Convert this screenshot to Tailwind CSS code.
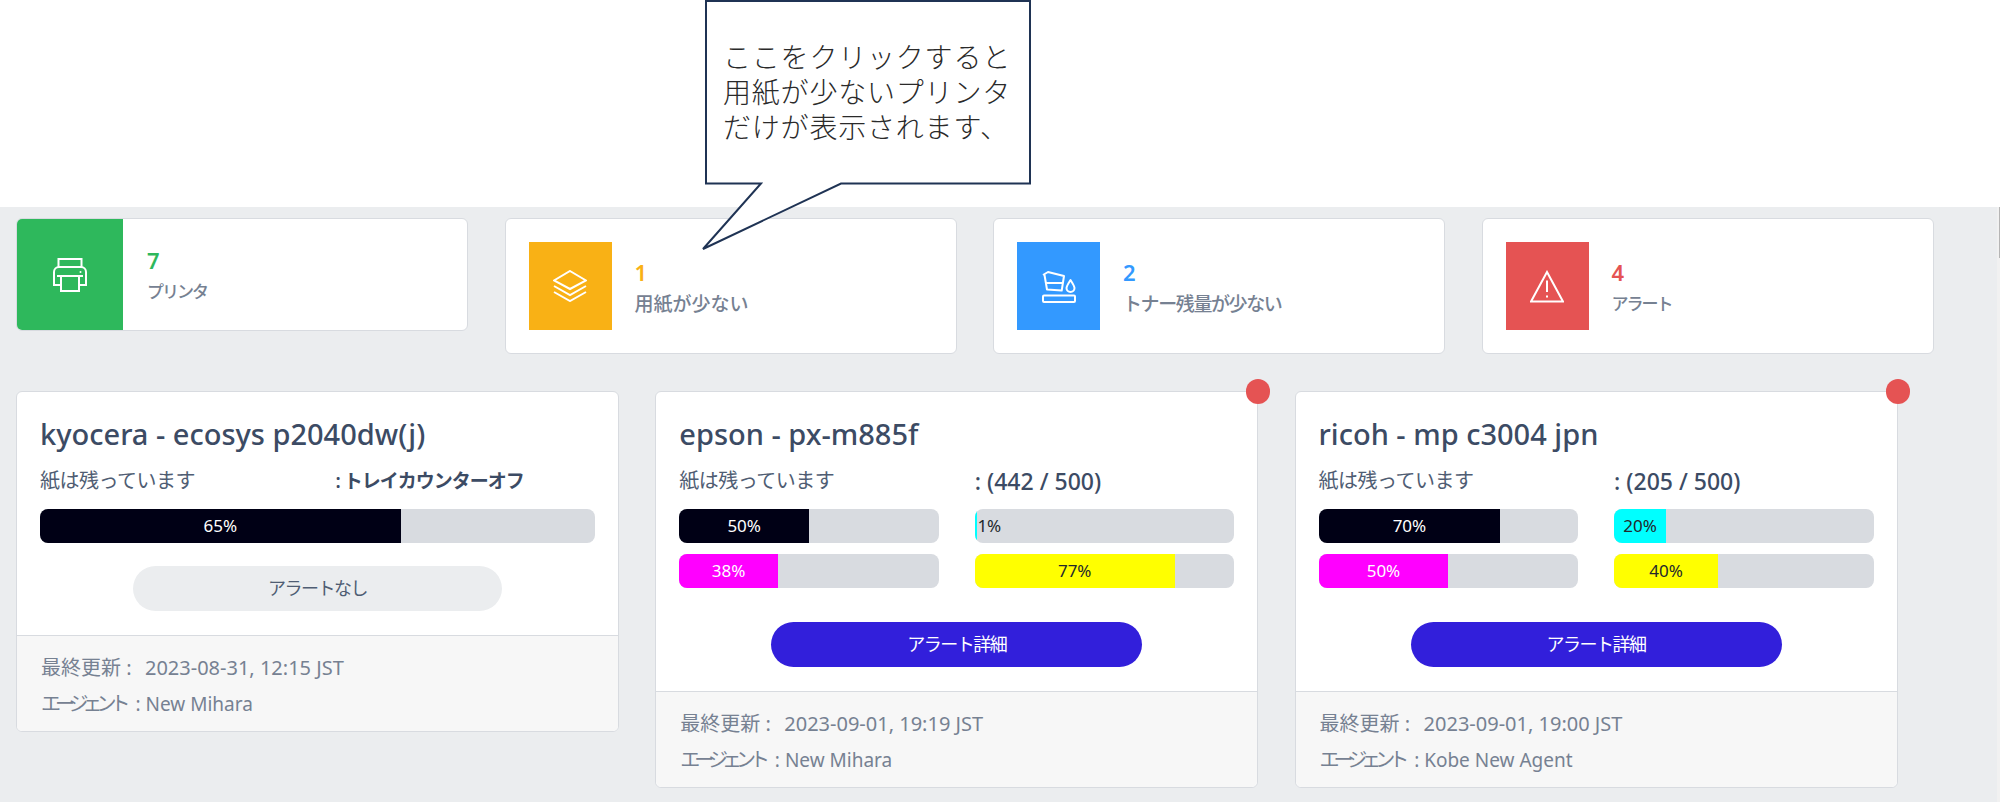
<!DOCTYPE html>
<html lang="ja">
<head>
  <meta charset="UTF-8">
  <title>プリンタ</title>
  <script src="https://cdn.jsdelivr.net/npm/@tailwindcss/browser@4"></script>
</head>
<body class="relative bg-white text-[#3c4b64] font-['Noto_Sans','Noto_Sans_CJK_JP',sans-serif] h-[802px] overflow-hidden flex flex-col">

  <!-- Callout -->
  <div class="absolute left-[700px] top-0 w-[332px] h-[252px] z-10">
    <svg width="332" height="252" viewBox="0 0 332 252" class="absolute inset-0">
      <path d="M6 1H330V183.500H141L3 249L61 183.500H6Z" fill="#fff" stroke="#1f3354" stroke-width="2"/>
    </svg>
    <div class="absolute left-[23px] top-[40px] w-[300px] text-[28px] leading-[35px] font-light text-[#2a2a2a] tracking-[0.8px] whitespace-nowrap">
      <div>ここをクリックすると</div>
      <div>用紙が少ないプリンタ</div>
      <div>だけが表示されます、</div>
    </div>
  </div>

  <!-- Scrollbar -->
  <div class="absolute right-0 top-[207px] bottom-0 w-[3px] bg-[#f1f1f1]">
    <div class="ml-auto w-[1.500px] h-[51px] bg-[#b5b5b5]"></div>
  </div>

  <div class="h-[207px] shrink-0 bg-white"></div>

  <main class="flex-1 bg-[#ebedef]">
    <!-- Stat cards -->
    <div class="grid grid-cols-[repeat(4,452px)] gap-x-[36.500px] items-start pl-[16px] pt-[11px]">
      <div class="flex h-[113px] bg-white border border-[#d8dbe0] rounded-md overflow-hidden">
        <div class="w-[106px] flex items-center justify-center bg-[#2eb85c]">
          <svg width="34" height="34" viewBox="0 0 34 34" fill="none" stroke="#fff" stroke-width="2">
            <rect x="5.500" y="1" width="23" height="8"/>
            <path d="M8 27H1V14a5 5 0 0 1 5-5h22a5 5 0 0 1 5 5v13h-7"/>
            <path d="M4 18h26"/>
            <rect x="8" y="18" width="18" height="15"/>
            <circle cx="27.500" cy="14" r="1" fill="#fff" stroke="none"/>
          </svg>
        </div>
        <div class="pl-[24px] pt-[28px]">
          <div class="text-[22px] leading-[26px] font-semibold text-[#2eb85c]">7</div>
          <div class="text-[17px] leading-[24px] mt-[7px] font-medium text-[#768192] tracking-[-2px]">プリンタ</div>
        </div>
      </div>

      <div class="flex h-[136px] p-[23px] bg-white border border-[#d8dbe0] rounded-md">
        <div class="w-[83px] flex items-center justify-center bg-[#f9b115]">
          <svg width="34" height="32" viewBox="0 0 34 32" fill="none" stroke="#fff" stroke-width="2">
            <path d="M17 1L33 10.500L17 19L1 10.500Z"/>
            <path d="M1 16L17 25L33 16"/>
            <path d="M1 22L17 31L33 22"/>
          </svg>
        </div>
        <div class="pl-[23px] pt-[17px]">
          <div class="text-[22px] leading-[26px] font-semibold text-[#f9b115]">1</div>
          <div class="text-[19px] leading-[24px] mt-[7px] font-medium text-[#768192]">用紙が少ない</div>
        </div>
      </div>

      <div class="flex h-[136px] p-[23px] bg-white border border-[#d8dbe0] rounded-md">
        <div class="w-[83px] flex items-center justify-center bg-[#3399ff]">
          <svg width="34" height="33" viewBox="0 0 34 33" fill="none" stroke="#fff" stroke-width="2" stroke-linejoin="round">
            <path d="M1 5L6 2L22 6L19.700 20.600L5 19.500L2.500 5"/>
            <path d="M4 13L21 13"/>
            <path d="M28.500 10C26 14 24.500 16 24.500 18A4 4 0 0 0 32.500 18C32.500 16 31 14 28.500 10Z"/>
            <rect x="1" y="25.500" width="32" height="6.500" rx="1"/>
          </svg>
        </div>
        <div class="pl-[23px] pt-[17px]">
          <div class="text-[22px] leading-[26px] font-semibold text-[#3399ff]">2</div>
          <div class="text-[19px] leading-[24px] mt-[7px] font-medium text-[#768192] tracking-[-1.400px]">トナー残量が少ない</div>
        </div>
      </div>

      <div class="flex h-[136px] p-[23px] bg-white border border-[#d8dbe0] rounded-md">
        <div class="w-[83px] flex items-center justify-center bg-[#e55353]">
          <svg width="34" height="33" viewBox="0 0 34 33" fill="none" stroke="#fff" stroke-width="2">
            <path d="M17 2L33 31.500H1Z"/>
            <path d="M17 10.500V22"/>
            <path d="M17 25.500V27.500"/>
          </svg>
        </div>
        <div class="pl-[23px] pt-[17px]">
          <div class="text-[22px] leading-[26px] font-semibold text-[#e55353]">4</div>
          <div class="text-[17px] leading-[24px] mt-[7px] font-medium text-[#768192] tracking-[-2px]">アラート</div>
        </div>
      </div>
    </div>

    <!-- Printer cards -->
    <div class="grid grid-cols-[repeat(3,603px)] gap-x-[36.300px] items-start pl-[16px] mt-[37px]">

      <div class="bg-white border border-[#d8dbe0] rounded-md overflow-hidden">
        <div class="h-[243px] px-[23px] pt-[23px]">
          <h2 class="text-[29px] leading-[38px] font-medium">kyocera - ecosys p2040dw(j)</h2>
          <div class="grid grid-cols-2 gap-x-[36px] mt-[12px] h-[32px] leading-[32px]">
            <div class="text-[20px] text-[#4f5d73] tracking-[-0.500px]">紙は残っています</div>
            <div class="text-[19px] font-semibold tracking-[-1px]">: トレイカウンターオフ</div>
          </div>
          <div class="mt-[12px] h-[34px] bg-[#d8dbe0] rounded-lg overflow-hidden flex">
            <div class="bg-[#000015] text-white text-[17px] flex items-center justify-center" style="width:65%">65%</div>
          </div>
          <div class="mt-[23px] mx-[93px] h-[45px] rounded-full bg-[#ebedef] text-[18px] text-[#4f5d73] flex items-center justify-center tracking-[-1.500px]">アラートなし</div>
        </div>
        <div class="border-t border-[#d8dbe0] bg-[#f7f7f7] px-[24px] pt-[14px] pb-[9px] text-[#768192] text-[20px] leading-[36px]">
          <div>最終更新 :&nbsp; <span class="ml-[3px]">2023-08-31, 12:15 JST</span></div>
          <div><span class="tracking-[-6px]">エージェント</span><span class="text-[19px] ml-[6px]"> : New Mihara</span></div>
        </div>
      </div>

      <div class="relative bg-white border border-[#d8dbe0] rounded-md">
        <span class="absolute -top-[13px] -right-[13px] w-[24px] h-[25px] rounded-full bg-[#e55353]"></span>
        <div class="h-[299px] px-[23px] pt-[23px]">
          <h2 class="text-[29px] leading-[38px] font-medium">epson - px-m885f</h2>
          <div class="grid grid-cols-2 gap-x-[36px] mt-[12px] h-[32px] leading-[32px]">
            <div class="text-[20px] text-[#4f5d73] tracking-[-0.500px]">紙は残っています</div>
            <div class="text-[23px] font-medium">: (442 / 500)</div>
          </div>
          <div class="grid grid-cols-2 gap-x-[36px] gap-y-[11px] mt-[12px]">
            <div class="h-[34px] bg-[#d8dbe0] rounded-lg overflow-hidden flex">
              <div class="bg-[#000015] text-white text-[17px] flex items-center justify-center" style="width:50%">50%</div>
            </div>
            <div class="h-[34px] bg-[#d8dbe0] rounded-lg overflow-hidden flex">
              <div class="bg-[#00ffff] shrink-0" style="width:1%"></div>
              <span class="self-center text-[17px] text-[#23282c]">1%</span>
            </div>
            <div class="h-[34px] bg-[#d8dbe0] rounded-lg overflow-hidden flex">
              <div class="bg-[#ff00ff] text-white text-[17px] flex items-center justify-center" style="width:38%">38%</div>
            </div>
            <div class="h-[34px] bg-[#d8dbe0] rounded-lg overflow-hidden flex">
              <div class="bg-[#ffff00] text-[#23282c] text-[17px] flex items-center justify-center" style="width:77%">77%</div>
            </div>
          </div>
          <div class="mt-[34px] mx-[92px] h-[45px] rounded-full bg-[#321fdb] text-white text-[18px] flex items-center justify-center tracking-[-1.500px]">アラート詳細</div>
        </div>
        <div class="border-t border-[#d8dbe0] bg-[#f7f7f7] rounded-b-md px-[24px] pt-[14px] pb-[9px] text-[#768192] text-[20px] leading-[36px]">
          <div>最終更新 :&nbsp; <span class="ml-[3px]">2023-09-01, 19:19 JST</span></div>
          <div><span class="tracking-[-6px]">エージェント</span><span class="text-[19px] ml-[6px]"> : New Mihara</span></div>
        </div>
      </div>

      <div class="relative bg-white border border-[#d8dbe0] rounded-md">
        <span class="absolute -top-[13px] -right-[13px] w-[24px] h-[25px] rounded-full bg-[#e55353]"></span>
        <div class="h-[299px] px-[23px] pt-[23px]">
          <h2 class="text-[29px] leading-[38px] font-medium">ricoh - mp c3004 jpn</h2>
          <div class="grid grid-cols-2 gap-x-[36px] mt-[12px] h-[32px] leading-[32px]">
            <div class="text-[20px] text-[#4f5d73] tracking-[-0.500px]">紙は残っています</div>
            <div class="text-[23px] font-medium">: (205 / 500)</div>
          </div>
          <div class="grid grid-cols-2 gap-x-[36px] gap-y-[11px] mt-[12px]">
            <div class="h-[34px] bg-[#d8dbe0] rounded-lg overflow-hidden flex">
              <div class="bg-[#000015] text-white text-[17px] flex items-center justify-center" style="width:70%">70%</div>
            </div>
            <div class="h-[34px] bg-[#d8dbe0] rounded-lg overflow-hidden flex">
              <div class="bg-[#00ffff] text-[#23282c] text-[17px] flex items-center justify-center" style="width:20%">20%</div>
            </div>
            <div class="h-[34px] bg-[#d8dbe0] rounded-lg overflow-hidden flex">
              <div class="bg-[#ff00ff] text-white text-[17px] flex items-center justify-center" style="width:50%">50%</div>
            </div>
            <div class="h-[34px] bg-[#d8dbe0] rounded-lg overflow-hidden flex">
              <div class="bg-[#ffff00] text-[#23282c] text-[17px] flex items-center justify-center" style="width:40%">40%</div>
            </div>
          </div>
          <div class="mt-[34px] mx-[92px] h-[45px] rounded-full bg-[#321fdb] text-white text-[18px] flex items-center justify-center tracking-[-1.500px]">アラート詳細</div>
        </div>
        <div class="border-t border-[#d8dbe0] bg-[#f7f7f7] rounded-b-md px-[24px] pt-[14px] pb-[9px] text-[#768192] text-[20px] leading-[36px]">
          <div>最終更新 :&nbsp; <span class="ml-[3px]">2023-09-01, 19:00 JST</span></div>
          <div><span class="tracking-[-6px]">エージェント</span><span class="text-[19px] ml-[6px]"> : Kobe New Agent</span></div>
        </div>
      </div>
    </div>
  </main>
</body>
</html>
